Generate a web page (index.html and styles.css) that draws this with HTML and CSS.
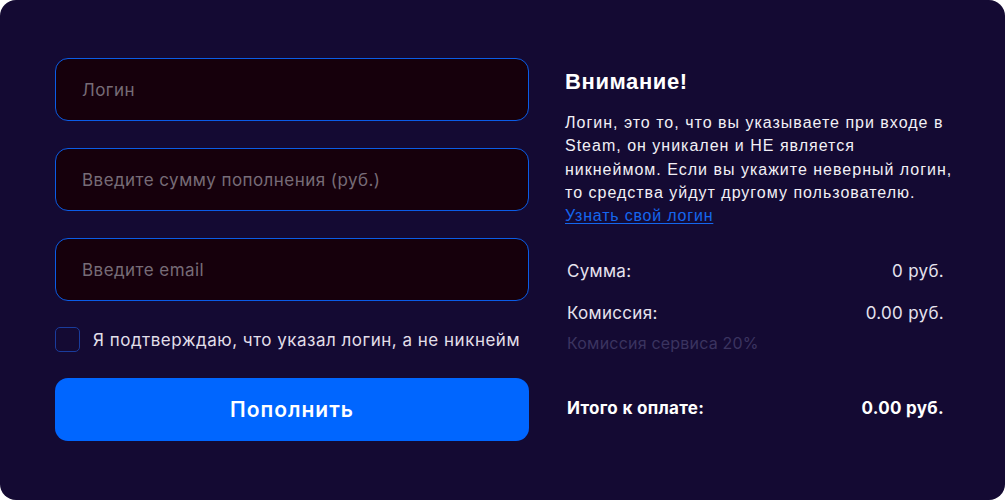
FILE: index.html
```html
<!DOCTYPE html>
<html lang="ru">
<head>
<meta charset="utf-8">
<link rel="stylesheet" href="styles.css">
</head>
<body>
<div class="card">
  <form class="form">
    <div class="field"><input class="input" type="text" placeholder="Логин"></div>
    <div class="field"><input class="input" type="text" placeholder="Введите сумму пополнения (руб.)"></div>
    <div class="field"><input class="input" type="text" placeholder="Введите email"></div>
    <label class="check">
      <span class="box"></span>
      <span class="check-text">Я подтверждаю, что указал логин, а не никнейм</span>
    </label>
    <button class="submit" type="button">Пополнить</button>
  </form>
  <aside class="info">
    <h2 class="title">Внимание!</h2>
    <p class="note">Логин, это то, что вы указываете при входе в Steam, он уникален и НЕ является никнеймом. Если вы укажите неверный логин, то средства уйдут другому пользователю.<br><a class="link" href="#">Узнать свой логин</a></p>
    <div class="rows">
      <div class="row"><span>Сумма:</span><span>0 руб.</span></div>
      <div class="row row-fee"><span>Комиссия:</span><span>0.00 руб.</span></div>
      <div class="hint">Комиссия сервиса 20%</div>
      <div class="row row-total"><span>Итого к оплате:</span><span>0.00 руб.</span></div>
    </div>
  </aside>
</div>
</body>
</html>
```
FILE: styles.css
```css
html, body {
  margin: 0;
  padding: 0;
  background: #ffffff;
}
.card {
  box-sizing: border-box;
  width: 1005px;
  height: 500px;
  background: #140a33;
  border-radius: 16px;
  display: flex;
  gap: 36px;
  padding: 58px 0 0 55px;
  font-family: Inter, "Noto Sans", sans-serif;
}
.form {
  width: 474px;
  display: flex;
  flex-direction: column;
}
.field {
  margin-bottom: 27px;
}
.input {
  box-sizing: border-box;
  width: 100%;
  height: 63px;
  background: #16000c;
  border: 1.5px solid #0b5ce6;
  border-radius: 13px;
  padding: 0 26px;
  font-family: Inter, "Noto Sans", sans-serif;
  font-size: 17px;
  letter-spacing: 0.45px;
  color: #e0dde8;
  outline: none;
}
.input::placeholder {
  color: #776c77;
}
.check {
  display: flex;
  align-items: center;
  gap: 13px;
  margin-top: -1px;
  margin-bottom: 26px;
}
.box {
  box-sizing: border-box;
  width: 25px;
  height: 25px;
  border: 1.5px solid #1a3c9c;
  border-radius: 5px;
  flex: none;
}
.check-text {
  color: #e2dfe9;
  font-size: 17px;
  letter-spacing: 0.5px;
}
.submit {
  height: 63px;
  border: none;
  border-radius: 13px;
  background: #0066ff;
  color: #ffffff;
  font-family: Inter, "Noto Sans", sans-serif;
  font-size: 21px;
  letter-spacing: 1px;
  font-weight: 600;
}
.info {
  width: 388px;
  padding-top: 11px;
  color: #ffffff;
}
.title {
  margin: 0 0 16px 0;
  font-family: "Liberation Sans", Arial, sans-serif;
  font-size: 22px;
  letter-spacing: 0.6px;
  font-weight: 700;
  line-height: 26px;
}
.note {
  margin: 0;
  font-family: "Liberation Sans", Arial, sans-serif;
  font-size: 16px;
  letter-spacing: 1px;
  line-height: 23.3px;
  color: #f2f0f6;
}
.link {
  color: #1566ee;
  letter-spacing: 0.8px;
  text-decoration: underline;
  text-underline-offset: 2px;
}
.rows {
  margin-top: 34px;
  padding-left: 2px;
  width: 377px;
}
.row {
  display: flex;
  justify-content: space-between;
  font-size: 17px;
  letter-spacing: 0.3px;
  line-height: 20px;
  color: #e6e3ee;
}
.row-fee {
  margin-top: 22px;
}
.hint {
  margin-top: 10px;
  font-size: 16px;
  letter-spacing: 0.2px;
  line-height: 20px;
  color: #3b3460;
}
.row-total {
  margin-top: 45px;
  font-weight: 700;
  color: #ffffff;
}
```
